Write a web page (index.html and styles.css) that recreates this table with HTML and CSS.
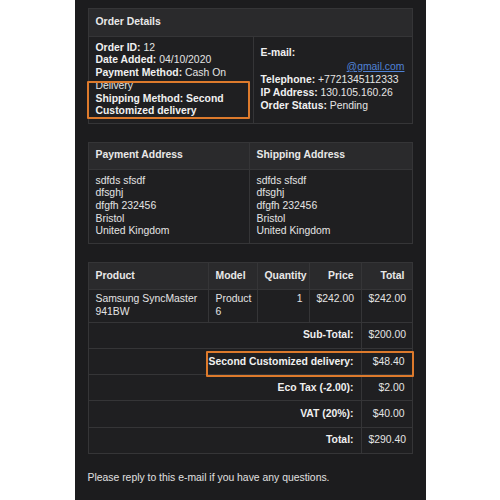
FILE: index.html
```html
<!DOCTYPE html>
<html>
<head>
<meta charset="utf-8">
<link rel="stylesheet" href="styles.css">
</head>
<body>
<div class="panel">
  <div class="wrap">
    <table class="tbl t1">
      <thead>
        <tr><th colspan="2">Order Details</th></tr>
      </thead>
      <tbody>
        <tr>
          <td class="c-left">
            <b>Order ID:</b> 12<br>
            <b>Date Added:</b> 04/10/2020<br>
            <b>Payment Method:</b> Cash On Delivery<br>
            <b>Shipping Method: Second Customized delivery</b>
          </td>
          <td class="c-right">
            <b>E-mail:</b>
            <div class="mail"><a href="#">@gmail.com</a></div>
            <b>Telephone:</b> +7721345112333<br>
            <b>IP Address:</b> 130.105.160.26<br>
            <b>Order Status:</b> Pending
          </td>
        </tr>
      </tbody>
    </table>
    <div class="mark mark1"></div>
  </div>

  <table class="tbl t2">
    <thead>
      <tr><th class="c-half">Payment Address</th><th>Shipping Address</th></tr>
    </thead>
    <tbody>
      <tr>
        <td>sdfds sfsdf<br>dfsghj<br>dfgfh 232456<br>Bristol<br>United Kingdom</td>
        <td>sdfds sfsdf<br>dfsghj<br>dfgfh 232456<br>Bristol<br>United Kingdom</td>
      </tr>
    </tbody>
  </table>

  <div class="wrap">
    <table class="tbl t3">
      <colgroup>
        <col>
        <col class="w-model">
        <col class="w-qty">
        <col class="w-price">
        <col class="w-total">
      </colgroup>
      <thead>
        <tr>
          <th>Product</th>
          <th>Model</th>
          <th class="num qty">Quantity</th>
          <th class="num">Price</th>
          <th class="num">Total</th>
        </tr>
      </thead>
      <tbody>
        <tr class="prod-row">
          <td>Samsung SyncMaster 941BW</td>
          <td>Product 6</td>
          <td class="num qty">1</td>
          <td class="num">$242.00</td>
          <td class="num">$242.00</td>
        </tr>
      </tbody>
      <tfoot>
        <tr><td colspan="4" class="lbl">Sub-Total:</td><td class="num">$200.00</td></tr>
        <tr><td colspan="4" class="lbl">Second Customized delivery:</td><td class="num">$48.40</td></tr>
        <tr><td colspan="4" class="lbl">Eco Tax (-2.00):</td><td class="num">$2.00</td></tr>
        <tr><td colspan="4" class="lbl">VAT (20%):</td><td class="num">$40.00</td></tr>
        <tr><td colspan="4" class="lbl">Total:</td><td class="num">$290.40</td></tr>
      </tfoot>
    </table>
    <div class="mark mark2"></div>
  </div>

  <p class="note">Please reply to this e-mail if you have any questions.</p>
</div>
</body>
</html>
```

FILE: styles.css
```css
* { box-sizing: border-box; }
html, body {
  margin: 0;
  padding: 0;
  background: #ffffff;
}
body {
  font-family: "Liberation Sans", Arial, sans-serif;
  font-size: 10.4px;
  line-height: 12.7px;
  color: #e4e4e4;
}
.panel {
  width: 351px;
  min-height: 500px;
  margin: 0 auto;
  background: #1c1c1e;
  padding: 8px 13px 10px;
}
.wrap {
  position: relative;
}
.tbl {
  width: 100%;
  border-collapse: collapse;
  margin-bottom: 18px;
}
.tbl th, .tbl td {
  border: 1px solid #353537;
  text-align: left;
  vertical-align: top;
}
.tbl th {
  background: #2a2a2c;
  font-weight: bold;
  padding: 7px 7px;
  color: #e8e8e8;
}
.tbl td {
  background: #1f1f21;
  padding: 5px 7px;
}
.tbl b { color: #f0f0f0; }

.t1 .c-left { width: 165px; }
.t1 .c-right { vertical-align: middle; }
.mail {
  text-align: right;
  margin: 1px 0 1px;
}
.mail a {
  color: #4f82d6;
  text-decoration: underline;
}

.t2 th { padding: 6.5px 7px; }
.t2 .c-half { width: 161px; }

.t3 { table-layout: fixed; }
.t3 th { padding: 6.5px 7px; }
.t3 th.qty { padding-right: 3px; white-space: nowrap; }
.t3 td { padding: 6.2px 7px; }
.t3 .prod-row td { padding: 3.5px 7px; }
.t3 .prod-row td.qty { padding-right: 6px; }
.t3 .num { text-align: right; }
.t3 .w-model { width: 49px; }
.t3 .w-qty { width: 52px; }
.t3 .w-price { width: 52px; }
.t3 .w-total { width: 51px; }
.t3 tfoot td { vertical-align: middle; }
.t3 .lbl {
  text-align: right;
  font-weight: bold;
  color: #f0f0f0;
}

.mark {
  position: absolute;
  border: 2px solid #dd7a2c;
  border-radius: 1px;
  pointer-events: none;
}
.mark1 { left: -1px; top: 73px; width: 163px; height: 38px; }
.mark2 { left: 118px; top: 88.5px; width: 208px; height: 26px; }

.note {
  margin: 0;
  color: #e0e0e0;
}
```
